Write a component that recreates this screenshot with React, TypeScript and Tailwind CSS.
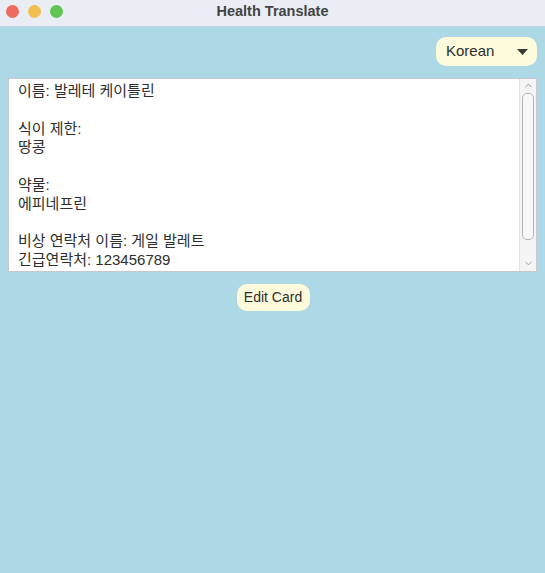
import { ChevronUp, ChevronDown } from 'lucide-react';

const lines = [
  '이름: 발레테 케이틀린',
  '',
  '식이 제한:',
  '땅콩',
  '',
  '약물:',
  '에피네프린',
  '',
  '비상 연락처 이름: 게일 발레트',
  '긴급연락처: 123456789',
];

export default function App() {
  return (
    <div
      className="h-screen w-full flex flex-col bg-[#add8e6] text-[#2e2e2e]"
      style={{ fontFamily: '"Liberation Sans", "Noto Sans CJK KR", sans-serif' }}
    >
      {/* Title bar */}
      <div className="relative h-[27px] flex items-center justify-center bg-[#eaeef4] border-b border-[#c5d3dc]">
        <div className="absolute left-[6px] top-[5px] flex gap-[9px]">
          <span className="w-[13px] h-[13px] rounded-full bg-[#ec6a5e]" />
          <span className="w-[13px] h-[13px] rounded-full bg-[#f4bf4f]" />
          <span className="w-[13px] h-[13px] rounded-full bg-[#61c554]" />
        </div>
        <p className="text-[14.5px] font-bold text-[#434343] -mt-[3px]">Health Translate</p>
      </div>

      {/* Main */}
      <main className="flex-1 flex flex-col px-[8px]">
        <div className="flex justify-end pt-[10px]">
          <button className="w-[101px] h-[29px] rounded-[10px] bg-[#fefbdc] flex items-center justify-between pl-[10px] pr-[9px] text-[15px] text-[#2e2e2e]">
            <span>Korean</span>
            <svg width="11" height="6" viewBox="0 0 11 6">
              <path d="M0 0 H11 L5.5 6 Z" fill="#3a3a3a" />
            </svg>
          </button>
        </div>

        <div className="mt-[12px] h-[194px] flex bg-white border border-[#c4c8cc]">
          <div className="flex-1 pl-[9px] pt-[3px] text-[15px] leading-[18.8px] text-[#2e2e2e] overflow-hidden">
            {lines.map((l, i) => (
              <div key={i} className="h-[18.8px] whitespace-pre">{l || ' '}</div>
            ))}
          </div>
          <div className="w-[17px] bg-[#f4f4f4] border-l border-[#e2e2e2] flex flex-col items-center">
            <ChevronUp className="w-[11px] h-[11px] mt-[1px] text-[#7a7a7a]" strokeWidth={1.5} />
            <div className="mt-[2px] w-[12px] h-[147px] rounded-[5px] bg-[#f7f7f7] border border-[#b5b5b5]" />
            <div className="flex-1" />
            <ChevronDown className="w-[11px] h-[11px] mb-[2px] text-[#7a7a7a]" strokeWidth={1.5} />
          </div>
        </div>

        <div className="flex justify-center mt-[12px]">
          <button className="w-[73px] h-[27px] rounded-[10px] bg-[#fefbdc] text-[14px] text-[#2e2e2e] ml-[1px]">
            Edit Card
          </button>
        </div>
      </main>
    </div>
  );
}
